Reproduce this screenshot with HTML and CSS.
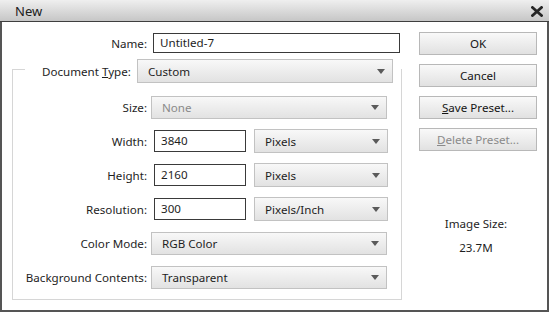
FILE: index.html
```html
<!DOCTYPE html>
<html>
<head>
<meta charset="utf-8">
<link rel="stylesheet" href="styles.css">
</head>
<body>
<div class="window">
  <div class="titlebar">
    <span class="title">New</span>
    <svg class="close" width="12" height="11" viewBox="0 0 12 11"><path d="M1.5 1.5 L10.5 9.5 M10.5 1.5 L1.5 9.5" stroke="#262626" stroke-width="2.8" stroke-linecap="square" fill="none"/></svg>
  </div>
  <div class="body">
    <div class="left">
      <div class="name-row">
        <span class="lbl name-lbl">Name:</span>
        <div class="input name-input">Untitled-7</div>
      </div>
      <div class="group">
        <div class="group-head">
          <span class="head-lbl">Document <u>T</u>ype:</span>
          <div class="select head-select"><span>Custom</span><i class="arrow"></i></div>
        </div>
        <div class="rows">
          <div class="row">
            <span class="lbl">Size:</span>
            <div class="select full disabled"><span>None</span><i class="arrow"></i></div>
          </div>
          <div class="row">
            <span class="lbl">Width:</span>
            <div class="input num">3840</div>
            <div class="select unit"><span>Pixels</span><i class="arrow"></i></div>
          </div>
          <div class="row">
            <span class="lbl">Height:</span>
            <div class="input num">2160</div>
            <div class="select unit"><span>Pixels</span><i class="arrow"></i></div>
          </div>
          <div class="row">
            <span class="lbl">Resolution:</span>
            <div class="input num">300</div>
            <div class="select unit"><span>Pixels/Inch</span><i class="arrow"></i></div>
          </div>
          <div class="row">
            <span class="lbl">Color Mode:</span>
            <div class="select full"><span>RGB Color</span><i class="arrow"></i></div>
          </div>
          <div class="row">
            <span class="lbl">Background Contents:</span>
            <div class="select full"><span>Transparent</span><i class="arrow"></i></div>
          </div>
        </div>
      </div>
    </div>
    <div class="right">
      <div class="btn">OK</div>
      <div class="btn">Cancel</div>
      <div class="btn"><span><u>S</u>ave Preset...</span></div>
      <div class="btn disabled"><span><u>D</u>elete Preset...</span></div>
      <div class="info">
        <div class="info-lbl">Image Size:</div>
        <div class="info-val">23.7M</div>
      </div>
    </div>
  </div>
</div>
</body>
</html>
```

FILE: styles.css
```css
* { box-sizing: border-box; }
html, body { margin: 0; padding: 0; background: #ffffff; }
body {
  font-family: "Noto Sans", "DejaVu Sans", sans-serif;
  font-size: 11.6px;
  color: #1e1e1e;
}
.window {
  width: 549px;
  height: 312px;
  display: flex;
  flex-direction: column;
}
.titlebar {
  height: 22px;
  flex: none;
  background: linear-gradient(#efefef, #c6c6c6);
  border-bottom: 1px solid #3e3e3e;
  display: flex;
  align-items: center;
  justify-content: space-between;
  padding: 0 6px 0 15px;
}
.title {
  font-size: 13px;
  color: #202020;
  line-height: 20px;
}
.close { display: block; margin-top: 1px; }
.body {
  flex: 1;
  display: flex;
  background: #ffffff;
  border-left: 2px solid #555555;
  border-right: 2px solid #555555;
  border-bottom: 2px solid #555555;
}
.left {
  width: 400px;
  padding-top: 11px;
  padding-left: 10px;
}
.name-row {
  display: flex;
  align-items: center;
  height: 20px;
}
.lbl {
  text-align: right;
  white-space: nowrap;
}
.name-lbl {
  width: 135px;
  margin-right: 6px;
}
.input {
  height: 20px;
  border: 1px solid #3a3a3a;
  background: #fff;
  padding-left: 6px;
  line-height: 18px;
  white-space: nowrap;
}
.name-input { width: 247px; }
.group {
  margin-top: 16px;
  width: 390px;
  height: 231px;
  border: 1px solid #d6d6d6;
}
.group-head {
  margin-top: -11px;
  margin-left: 12px;
  width: 376px;
  height: 24px;
  background: #fff;
  display: flex;
  align-items: center;
  padding-left: 17px;
}
.head-lbl {
  white-space: nowrap;
  width: 95px;
}
.select {
  height: 24px;
  border: 1px solid #c2c2c2;
  background: linear-gradient(#f8f8f8, #e2e2e2);
  display: flex;
  align-items: center;
  justify-content: space-between;
  padding: 0 7px 0 10px;
  white-space: nowrap;
}
.head-select { width: 256px; }
.arrow {
  width: 0;
  height: 0;
  border-left: 4.5px solid transparent;
  border-right: 4.5px solid transparent;
  border-top: 5px solid #5a5a5a;
}
.rows {
  margin-top: 12px;
  display: flex;
  flex-direction: column;
  gap: 10px;
}
.row {
  display: flex;
  align-items: center;
  height: 24px;
}
.row .lbl {
  width: 134px;
}
.row .select.full {
  margin-left: 4px;
  width: 236px;
  height: 23px;
}
.row .input.num {
  margin-left: 7px;
  width: 92px;
  height: 22px;
  line-height: 20px;
}
.row .select.unit {
  margin-left: 8px;
  width: 134px;
}
.disabled { color: #8a8a8a; }
.right {
  padding-top: 10px;
  margin-left: 17px;
  width: 118px;
  display: flex;
  flex-direction: column;
  gap: 9px;
}
.btn {
  height: 23px;
  border: 1px solid #b8b8b8;
  background: linear-gradient(#f9f9f9, #e1e1e1);
  display: flex;
  align-items: center;
  justify-content: center;
  color: #141414;
  white-space: nowrap;
}
.btn.disabled { color: #8a8a8a; }
.info {
  margin-top: 56px;
  text-align: center;
  padding-right: 4px;
}
.info-lbl { line-height: 16px; }
.info-val { line-height: 16px; margin-top: 8px; }
```
